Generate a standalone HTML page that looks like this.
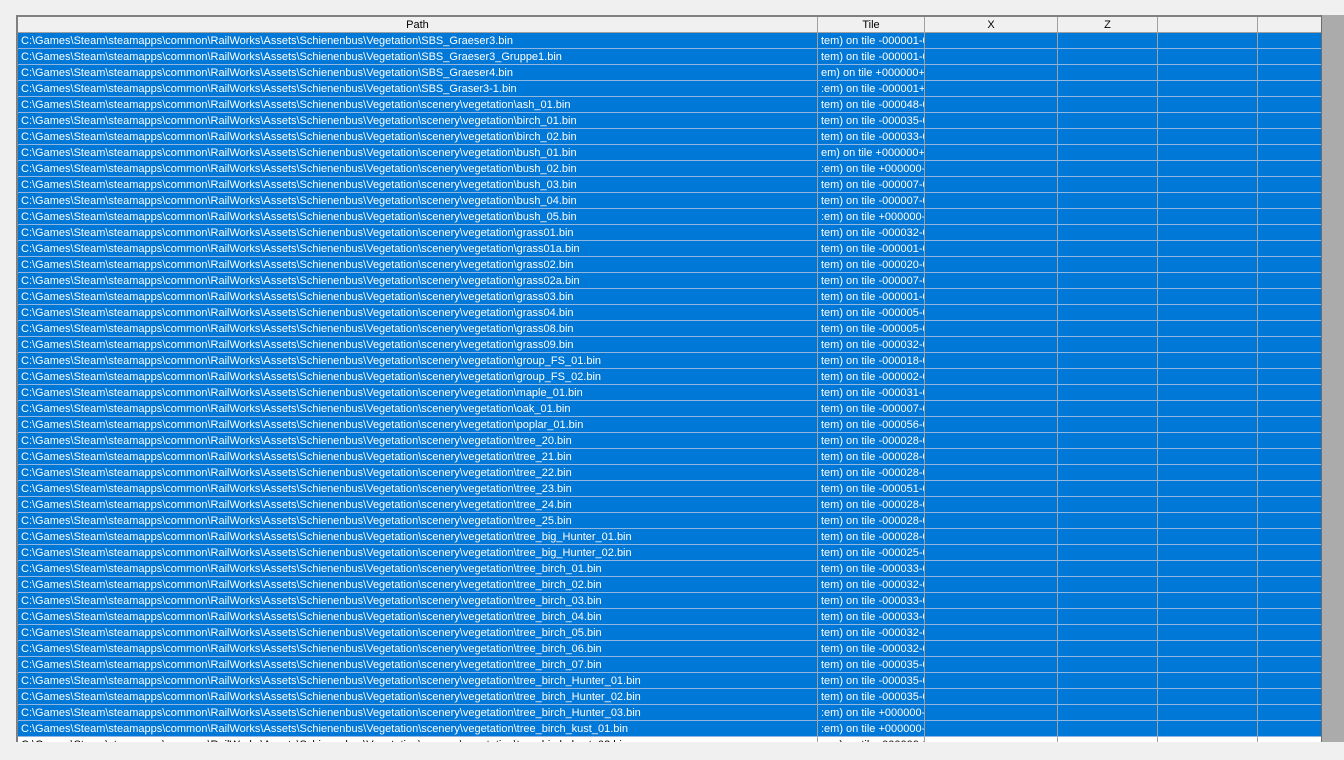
<!DOCTYPE html><html><head><style>
body{margin:0;width:1344px;height:760px;background:#f0f0f0;overflow:hidden;position:relative;font-family:"Liberation Sans",sans-serif;font-size:11px}
#g{position:absolute;left:16px;top:15px;width:1306px;height:727px;border-top:2px solid #808080;border-left:2px solid #808080;box-sizing:border-box;background:#fff;overflow:hidden}
#sb{position:absolute;left:1321px;top:15px;width:23px;height:727px;background:#ababab;border-left:1px solid #6d6d6d;box-sizing:border-box}
.r{position:absolute;left:0;height:16px;width:1304px}
.c{position:absolute;top:0;height:16px;box-sizing:border-box;border-right:1px solid #a0a0a0;border-bottom:1px solid #8fb6e0;white-space:nowrap;overflow:hidden;line-height:16px;padding-left:3px}
.h .c{background:#f0f0f0;color:#000;text-align:center;padding:0;border-bottom:1px solid #a0a0a0}
.s .c{background:#0078d7;color:#fff}
.w .c{background:#fff;color:#000;border-bottom:none}
</style></head><body>
<div id="g"><div id="rows"></div></div><div id="sb"></div>
<script>
const files=["SBS_Graeser3.bin","SBS_Graeser3_Gruppe1.bin","SBS_Graeser4.bin","SBS_Graser3-1.bin","scenery\\vegetation\\ash_01.bin","scenery\\vegetation\\birch_01.bin","scenery\\vegetation\\birch_02.bin","scenery\\vegetation\\bush_01.bin","scenery\\vegetation\\bush_02.bin","scenery\\vegetation\\bush_03.bin","scenery\\vegetation\\bush_04.bin","scenery\\vegetation\\bush_05.bin","scenery\\vegetation\\grass01.bin","scenery\\vegetation\\grass01a.bin","scenery\\vegetation\\grass02.bin","scenery\\vegetation\\grass02a.bin","scenery\\vegetation\\grass03.bin","scenery\\vegetation\\grass04.bin","scenery\\vegetation\\grass08.bin","scenery\\vegetation\\grass09.bin","scenery\\vegetation\\group_FS_01.bin","scenery\\vegetation\\group_FS_02.bin","scenery\\vegetation\\maple_01.bin","scenery\\vegetation\\oak_01.bin","scenery\\vegetation\\poplar_01.bin","scenery\\vegetation\\tree_20.bin","scenery\\vegetation\\tree_21.bin","scenery\\vegetation\\tree_22.bin","scenery\\vegetation\\tree_23.bin","scenery\\vegetation\\tree_24.bin","scenery\\vegetation\\tree_25.bin","scenery\\vegetation\\tree_big_Hunter_01.bin","scenery\\vegetation\\tree_big_Hunter_02.bin","scenery\\vegetation\\tree_birch_01.bin","scenery\\vegetation\\tree_birch_02.bin","scenery\\vegetation\\tree_birch_03.bin","scenery\\vegetation\\tree_birch_04.bin","scenery\\vegetation\\tree_birch_05.bin","scenery\\vegetation\\tree_birch_06.bin","scenery\\vegetation\\tree_birch_07.bin","scenery\\vegetation\\tree_birch_Hunter_01.bin","scenery\\vegetation\\tree_birch_Hunter_02.bin","scenery\\vegetation\\tree_birch_Hunter_03.bin","scenery\\vegetation\\tree_birch_kust_01.bin","scenery\\vegetation\\tree_birch_kust_02.bin"];
const tiles=["tem) on tile -000001-0","tem) on tile -000001-0","em) on tile +000000+l",":em) on tile -000001+0","tem) on tile -000048-0","tem) on tile -000035-0","tem) on tile -000033-0","em) on tile +000000+l",":em) on tile +000000-0","tem) on tile -000007-0","tem) on tile -000007-0",":em) on tile +000000-0","tem) on tile -000032-0","tem) on tile -000001-0","tem) on tile -000020-0","tem) on tile -000007-0","tem) on tile -000001-0","tem) on tile -000005-0","tem) on tile -000005-0","tem) on tile -000032-0","tem) on tile -000018-0","tem) on tile -000002-0","tem) on tile -000031-0","tem) on tile -000007-0","tem) on tile -000056-0","tem) on tile -000028-0","tem) on tile -000028-0","tem) on tile -000028-0","tem) on tile -000051-0","tem) on tile -000028-0","tem) on tile -000028-0","tem) on tile -000028-0","tem) on tile -000025-0","tem) on tile -000033-0","tem) on tile -000032-0","tem) on tile -000033-0","tem) on tile -000033-0","tem) on tile -000032-0","tem) on tile -000032-0","tem) on tile -000035-0","tem) on tile -000035-0","tem) on tile -000035-0",":em) on tile +000000-0",":em) on tile +000000-0",":em) on tile -000000-0"];
const cols=[[0,800],[800,107],[907,133],[1040,100],[1140,100],[1240,64]];
let h='';
function row(cls,top,vals){h+=`<div class="r ${cls}" style="top:${top}px">`;cols.forEach((c,i)=>{h+=`<div class="c" style="left:${c[0]}px;width:${c[1]}px">${vals[i]||''}</div>`});h+='</div>';}
row('h',0,['Path','Tile','X','Z','','']);
files.forEach((f,i)=>row(i<44?'s':'w',16+i*16,['C:\\Games\\Steam\\steamapps\\common\\RailWorks\\Assets\\Schienenbus\\Vegetation\\'+f,tiles[i]]));
document.getElementById('rows').innerHTML=h;
</script>
</body></html>
